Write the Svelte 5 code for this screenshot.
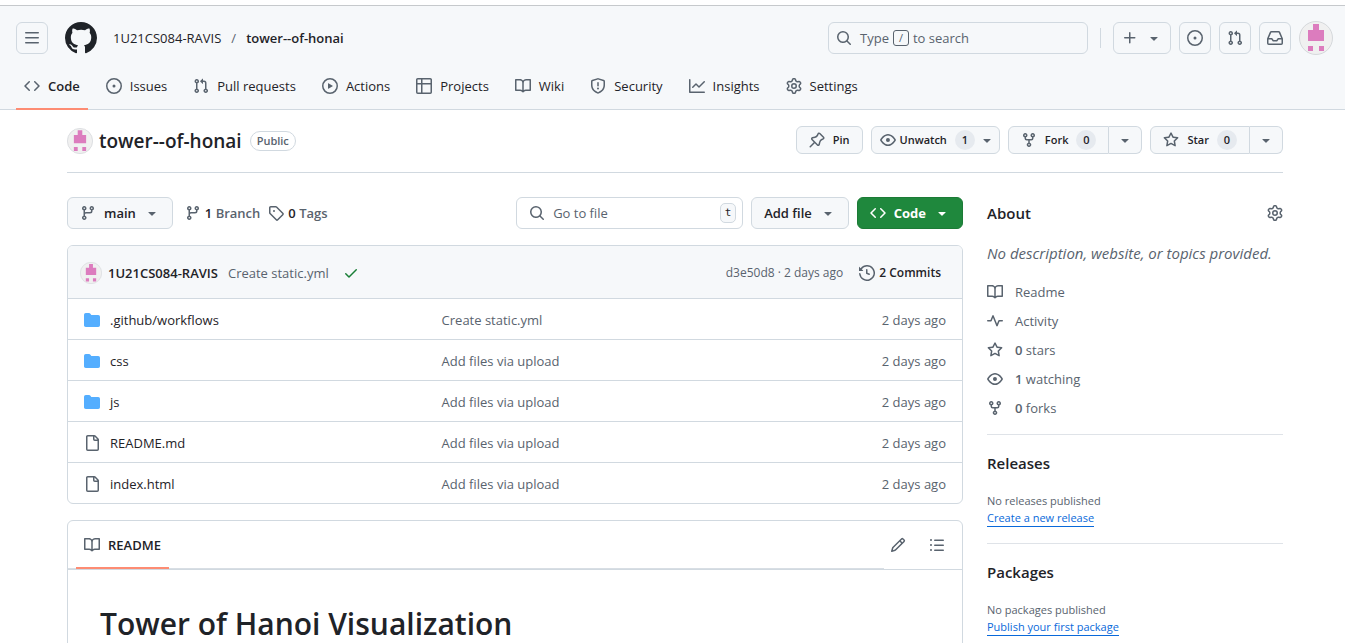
<script>
  const icons = {
    bars: 'M1 2.75A.75.75 0 0 1 1.75 2h12.5a.75.75 0 0 1 0 1.5H1.75A.75.75 0 0 1 1 2.75Zm0 5A.75.75 0 0 1 1.75 7h12.5a.75.75 0 0 1 0 1.5H1.75A.75.75 0 0 1 1 7.75ZM1.75 12h12.5a.75.75 0 0 1 0 1.5H1.75a.75.75 0 0 1 0-1.5Z',
    mark: 'M8 0c4.42 0 8 3.58 8 8a8.013 8.013 0 0 1-5.45 7.59c-.4.08-.55-.17-.55-.38 0-.27.01-1.13.01-2.2 0-.75-.25-1.23-.54-1.48 1.78-.2 3.65-.88 3.65-3.95 0-.88-.31-1.59-.82-2.15.08-.2.36-1.02-.08-2.12 0 0-.67-.22-2.2.82-.64-.18-1.32-.27-2-.27-.68 0-1.36.09-2 .27-1.53-1.03-2.2-.82-2.2-.82-.44 1.1-.16 1.92-.08 2.12-.51.56-.82 1.28-.82 2.15 0 3.06 1.86 3.75 3.64 3.95-.23.2-.44.55-.51 1.07-.46.21-1.61.55-2.33-.66-.15-.24-.6-.83-1.23-.82-.67.01-.27.38.01.53.34.19.73.9.82 1.13.16.45.68 1.31 2.69.94 0 .67.01 1.3.01 1.49 0 .21-.15.45-.55.38A7.995 7.995 0 0 1 0 8c0-4.42 3.58-8 8-8Z',
    code: 'm11.28 3.22 4.25 4.25a.75.75 0 0 1 0 1.06l-4.25 4.25a.749.749 0 0 1-1.275-.326.749.749 0 0 1 .215-.734L13.94 8l-3.72-3.72a.749.749 0 0 1 .326-1.275.749.749 0 0 1 .734.215Zm-6.56 0a.751.751 0 0 1 1.042.018.751.751 0 0 1 .018 1.042L2.06 8l3.72 3.72a.749.749 0 0 1-.326 1.275.749.749 0 0 1-.734-.215L.47 8.53a.75.75 0 0 1 0-1.06Z',
    issue: 'M8 9.5a1.5 1.5 0 1 0 0-3 1.5 1.5 0 0 0 0 3ZM8 0a8 8 0 1 1 0 16A8 8 0 0 1 8 0ZM1.5 8a6.5 6.5 0 1 0 13 0 6.5 6.5 0 0 0-13 0Z',
    pull: 'M1.5 3.25a2.25 2.25 0 1 1 3 2.122v5.256a2.251 2.251 0 1 1-1.5 0V5.372A2.25 2.25 0 0 1 1.5 3.25Zm5.677-.177L9.573.677A.25.25 0 0 1 10 .854V2.5h1A2.5 2.5 0 0 1 13.5 5v5.628a2.251 2.251 0 1 1-1.5 0V5a1 1 0 0 0-1-1h-1v1.646a.25.25 0 0 1-.427.177L7.177 3.427a.25.25 0 0 1 0-.354ZM3.75 2.5a.75.75 0 1 0 0 1.5.75.75 0 0 0 0-1.5Zm0 9.5a.75.75 0 1 0 0 1.5.75.75 0 0 0 0-1.5Zm8.25.75a.75.75 0 1 0 1.5 0 .75.75 0 0 0-1.5 0Z',
    play: 'M8 0a8 8 0 1 1 0 16A8 8 0 0 1 8 0ZM1.5 8a6.5 6.5 0 1 0 13 0 6.5 6.5 0 0 0-13 0Zm4.879-2.773 4.264 2.559a.25.25 0 0 1 0 .428l-4.264 2.559A.25.25 0 0 1 6 10.559V5.442a.25.25 0 0 1 .379-.215Z',
    table: 'M0 1.75C0 .784.784 0 1.75 0h12.5C15.216 0 16 .784 16 1.75v12.5A1.75 1.75 0 0 1 14.25 16H1.75A1.75 1.75 0 0 1 0 14.25ZM6.5 6.5v8h7.75a.25.25 0 0 0 .25-.25V6.5Zm8-1.5V1.75a.25.25 0 0 0-.25-.25H6.5V5Zm-13 1.5v7.75c0 .138.112.25.25.25H5v-8ZM5 5V1.5H1.75a.25.25 0 0 0-.25.25V5Z',
    book: 'M0 1.75A.75.75 0 0 1 .75 1h4.253c1.227 0 2.317.59 3 1.501A3.743 3.743 0 0 1 11.006 1h4.245a.75.75 0 0 1 .75.75v10.5a.75.75 0 0 1-.75.75h-4.507a2.25 2.25 0 0 0-1.591.659l-.622.621a.75.75 0 0 1-1.06 0l-.622-.621A2.25 2.25 0 0 0 5.258 13H.75a.75.75 0 0 1-.75-.75Zm7.251 10.324.004-5.073-.002-2.253A2.25 2.25 0 0 0 5.003 2.5H1.5v9h3.757a3.75 3.75 0 0 1 1.994.574ZM8.755 4.75l-.004 7.322a3.752 3.752 0 0 1 1.992-.572H14.5v-9h-3.495a2.25 2.25 0 0 0-2.25 2.25Z',
    shield: 'M7.467.133a1.748 1.748 0 0 1 1.066 0l5.25 1.68A1.75 1.75 0 0 1 15 3.48V7c0 1.566-.32 3.182-1.303 4.682-.983 1.498-2.585 2.813-5.032 3.855a1.697 1.697 0 0 1-1.33 0c-2.447-1.042-4.049-2.357-5.032-3.855C1.32 10.182 1 8.566 1 7V3.48a1.75 1.75 0 0 1 1.217-1.667Zm.61 1.429a.25.25 0 0 0-.153 0l-5.25 1.68a.25.25 0 0 0-.174.238V7c0 1.358.275 2.666 1.057 3.86.784 1.194 2.121 2.34 4.366 3.297a.196.196 0 0 0 .154 0c2.245-.956 3.582-2.104 4.366-3.298C13.225 9.666 13.5 8.36 13.5 7V3.48a.251.251 0 0 0-.174-.237l-5.25-1.68ZM8.75 4.75v3a.75.75 0 0 1-1.5 0v-3a.75.75 0 0 1 1.5 0ZM9 10.5a1 1 0 1 1-2 0 1 1 0 0 1 2 0Z',
    graph: 'M1.5 1.75V13.5h13.75a.75.75 0 0 1 0 1.5H.75a.75.75 0 0 1-.75-.75V1.75a.75.75 0 0 1 1.5 0Zm14.28 2.53-5.25 5.25a.75.75 0 0 1-1.06 0L7 7.06 4.28 9.78a.751.751 0 0 1-1.042-.018.751.751 0 0 1-.018-1.042l3.25-3.25a.75.75 0 0 1 1.06 0L10 7.94l4.72-4.72a.751.751 0 0 1 1.042.018.751.751 0 0 1 .018 1.042Z',
    gear: 'M8 0a8.2 8.2 0 0 1 .701.031C9.444.095 9.99.645 10.16 1.29l.288 1.107c.018.066.079.158.212.224.231.114.454.243.668.386.123.082.233.09.299.071l1.103-.303c.644-.176 1.392.021 1.82.63.27.385.506.792.704 1.218.315.675.111 1.422-.364 1.891l-.814.806c-.049.048-.098.147-.088.294.016.257.016.515 0 .772-.01.147.038.246.088.294l.814.806c.475.469.679 1.216.364 1.891a7.977 7.977 0 0 1-.704 1.217c-.428.61-1.176.807-1.82.63l-1.102-.302c-.067-.019-.177-.011-.3.071a5.909 5.909 0 0 1-.668.386c-.133.066-.194.158-.211.224l-.29 1.106c-.168.646-.715 1.196-1.458 1.26a8.006 8.006 0 0 1-1.402 0c-.743-.064-1.289-.614-1.458-1.26l-.289-1.106c-.018-.066-.079-.158-.212-.224a5.738 5.738 0 0 1-.668-.386c-.123-.082-.233-.09-.299-.071l-1.103.303c-.644.176-1.392-.021-1.82-.63a8.12 8.12 0 0 1-.704-1.218c-.315-.675-.111-1.422.363-1.891l.815-.806c.05-.048.098-.147.088-.294a6.214 6.214 0 0 1 0-.772c.01-.147-.038-.246-.088-.294l-.815-.806C.635 6.045.431 5.298.746 4.623a7.92 7.92 0 0 1 .704-1.217c.428-.61 1.176-.807 1.82-.63l1.102.302c.067.019.177.011.3-.071.214-.143.437-.272.668-.386.133-.066.194-.158.211-.224l.29-1.106C6.009.645 6.556.095 7.299.03 7.53.01 7.764 0 8 0Zm-.571 1.525c-.036.003-.108.036-.137.146l-.289 1.105c-.147.561-.549.967-.998 1.189-.173.086-.34.183-.5.29-.417.278-.97.423-1.529.27l-1.103-.303c-.109-.03-.175.016-.195.045-.22.312-.412.644-.573.99-.014.031-.021.11.059.19l.815.806c.411.406.562.957.53 1.456a4.709 4.709 0 0 0 0 .582c.032.499-.119 1.05-.53 1.456l-.815.806c-.081.08-.073.159-.059.19.162.346.353.677.573.989.02.03.085.076.195.046l1.102-.303c.56-.153 1.113-.008 1.53.27.161.107.328.204.501.29.447.222.85.629.997 1.189l.289 1.105c.029.109.101.143.137.146a6.6 6.6 0 0 0 1.142 0c.036-.003.108-.036.137-.146l.289-1.105c.147-.561.549-.967.998-1.189.173-.086.34-.183.5-.29.417-.278.97-.423 1.529-.27l1.103.303c.109.029.175-.016.195-.045.22-.313.411-.644.573-.99.014-.031.021-.11-.059-.19l-.815-.806c-.411-.406-.562-.957-.53-1.456a4.709 4.709 0 0 0 0-.582c-.032-.499.119-1.05.53-1.456l.815-.806c.081-.08.073-.159.059-.19a6.464 6.464 0 0 0-.573-.989c-.02-.03-.085-.076-.195-.046l-1.102.303c-.56.153-1.113.008-1.53-.27a4.44 4.44 0 0 0-.501-.29c-.447-.222-.85-.629-.997-1.189l-.289-1.105c-.029-.11-.101-.143-.137-.146a6.6 6.6 0 0 0-1.142 0ZM11 8a3 3 0 1 1-6 0 3 3 0 0 1 6 0ZM9.5 8a1.5 1.5 0 1 0-3.001.001A1.5 1.5 0 0 0 9.5 8Z',
    search: 'M10.68 11.74a6 6 0 0 1-7.922-8.982 6 6 0 0 1 8.982 7.922l3.04 3.04a.749.749 0 0 1-.326 1.275.749.749 0 0 1-.734-.215ZM11.5 7a4.499 4.499 0 1 0-8.997 0A4.499 4.499 0 0 0 11.5 7Z',
    plus: 'M7.75 2a.75.75 0 0 1 .75.75V7h4.25a.75.75 0 0 1 0 1.5H8.5v4.25a.75.75 0 0 1-1.5 0V8.5H2.75a.75.75 0 0 1 0-1.5H7V2.75A.75.75 0 0 1 7.75 2Z',
    down: 'm4.427 7.427 3.396 3.396a.25.25 0 0 0 .354 0l3.396-3.396A.25.25 0 0 0 11.396 7H4.604a.25.25 0 0 0-.177.427Z',
    inbox: 'M2.8 2.06A1.75 1.75 0 0 1 4.41 1h7.18c.7 0 1.333.417 1.61 1.06l2.74 6.395c.04.093.06.194.06.295v4.5A1.75 1.75 0 0 1 14.25 15H1.75A1.75 1.75 0 0 1 0 13.25v-4.5c0-.101.02-.202.06-.295Zm1.61.44a.25.25 0 0 0-.23.152L1.887 8H4.75a.75.75 0 0 1 .6.3L6.625 10h2.75l1.275-1.7a.75.75 0 0 1 .6-.3h2.863L11.82 2.652a.25.25 0 0 0-.23-.152Zm10.09 7h-2.875l-1.275 1.7a.75.75 0 0 1-.6.3h-3.5a.75.75 0 0 1-.6-.3L4.375 9.5H1.5v3.75c0 .138.112.25.25.25h12.5a.25.25 0 0 0 .25-.25Z',
    pin: 'm11.294.984 3.722 3.722a1.75 1.75 0 0 1-.504 2.826l-1.327.613a3.089 3.089 0 0 0-1.707 2.084l-.584 2.454c-.317 1.332-1.972 1.8-2.94.832L5.75 11.311 1.78 15.28a.749.749 0 1 1-1.06-1.06l3.969-3.97-2.204-2.204c-.968-.968-.5-2.623.832-2.94l2.454-.584a3.08 3.08 0 0 0 2.084-1.707l.613-1.327a1.75 1.75 0 0 1 2.826-.504ZM6.283 9.723l2.732 2.731a.25.25 0 0 0 .42-.119l.584-2.454a4.586 4.586 0 0 1 2.537-3.098l1.328-.613a.25.25 0 0 0 .072-.404l-3.722-3.722a.25.25 0 0 0-.404.072l-.613 1.328a4.584 4.584 0 0 1-3.098 2.537l-2.454.584a.25.25 0 0 0-.119.42l2.731 2.732Z',
    eye: 'M8 2c1.981 0 3.671.992 4.933 2.078 1.27 1.091 2.187 2.345 2.637 3.023a1.62 1.62 0 0 1 0 1.798c-.45.678-1.367 1.932-2.637 3.023C11.67 13.008 9.981 14 8 14c-1.981 0-3.671-.992-4.933-2.078C1.797 10.83.88 9.576.43 8.898a1.62 1.62 0 0 1 0-1.798c.45-.677 1.367-1.931 2.637-3.022C4.33 2.992 6.019 2 8 2ZM1.679 7.932a.12.12 0 0 0 0 .136c.411.622 1.241 1.75 2.366 2.717C5.176 11.758 6.527 12.5 8 12.5c1.473 0 2.825-.742 3.955-1.715 1.124-.967 1.954-2.096 2.366-2.717a.12.12 0 0 0 0-.136c-.412-.621-1.242-1.75-2.366-2.717C10.824 4.242 9.473 3.5 8 3.5c-1.473 0-2.825.742-3.955 1.715-1.124.967-1.954 2.096-2.366 2.717ZM8 10a2 2 0 1 1-.001-3.999A2 2 0 0 1 8 10Z',
    fork: 'M5 5.372v.878c0 .414.336.75.75.75h4.5a.75.75 0 0 0 .75-.75v-.878a2.25 2.25 0 1 1 1.5 0v.878a2.25 2.25 0 0 1-2.25 2.25h-1.5v2.128a2.251 2.251 0 1 1-1.5 0V8.5h-1.5A2.25 2.25 0 0 1 3.5 6.25v-.878a2.25 2.25 0 1 1 1.5 0ZM5 3.25a.75.75 0 1 0-1.5 0 .75.75 0 0 0 1.5 0Zm6.75.75a.75.75 0 1 0 0-1.5.75.75 0 0 0 0 1.5Zm-3 8.75a.75.75 0 1 0-1.5 0 .75.75 0 0 0 1.5 0Z',
    star: 'M8 .25a.75.75 0 0 1 .673.418l1.882 3.815 4.21.612a.75.75 0 0 1 .416 1.279l-3.046 2.97.719 4.192a.751.751 0 0 1-1.088.791L8 12.347l-3.766 1.98a.75.75 0 0 1-1.088-.79l.72-4.194L.818 6.374a.75.75 0 0 1 .416-1.28l4.21-.611L7.327.668A.75.75 0 0 1 8 .25Zm0 2.445L6.615 5.5a.75.75 0 0 1-.564.41l-3.097.45 2.24 2.184a.75.75 0 0 1 .216.664l-.528 3.084 2.769-1.456a.75.75 0 0 1 .698 0l2.77 1.456-.53-3.084a.75.75 0 0 1 .216-.664l2.24-2.183-3.096-.45a.75.75 0 0 1-.564-.41L8 2.694Z',
    branch: 'M9.5 3.25a2.25 2.25 0 1 1 3 2.122V6A2.5 2.5 0 0 1 10 8.5H6a1 1 0 0 0-1 1v1.128a2.251 2.251 0 1 1-1.5 0V5.372a2.25 2.25 0 1 1 1.5 0v1.836A2.493 2.493 0 0 1 6 7h4a1 1 0 0 0 1-1v-.628A2.25 2.25 0 0 1 9.5 3.25Zm-6 0a.75.75 0 1 0 1.5 0 .75.75 0 0 0-1.5 0Zm8.25-.75a.75.75 0 1 0 0 1.5.75.75 0 0 0 0-1.5ZM4.25 12a.75.75 0 1 0 0 1.5.75.75 0 0 0 0-1.5Z',
    tag: 'M1 7.775V2.75C1 1.784 1.784 1 2.75 1h5.025c.464 0 .91.184 1.238.513l6.25 6.25a1.75 1.75 0 0 1 0 2.474l-5.026 5.026a1.75 1.75 0 0 1-2.474 0l-6.25-6.25A1.752 1.752 0 0 1 1 7.775Zm1.5 0c0 .066.026.13.073.177l6.25 6.25a.25.25 0 0 0 .354 0l5.025-5.025a.25.25 0 0 0 0-.354l-6.25-6.25a.25.25 0 0 0-.177-.073H2.75a.25.25 0 0 0-.25.25ZM6 5a1 1 0 1 1 0 2 1 1 0 0 1 0-2Z',
    check: 'M13.78 4.22a.75.75 0 0 1 0 1.06l-7.25 7.25a.75.75 0 0 1-1.06 0L2.22 9.28a.751.751 0 0 1 .018-1.042.751.751 0 0 1 1.042-.018L6 10.94l6.72-6.72a.75.75 0 0 1 1.06 0Z',
    history: 'm.427 1.927 1.215 1.215a8.002 8.002 0 1 1-1.6 5.685.75.75 0 1 1 1.493-.154 6.5 6.5 0 1 0 1.18-4.458l1.358 1.358A.25.25 0 0 1 3.896 6H.25A.25.25 0 0 1 0 5.75V2.104a.25.25 0 0 1 .427-.177ZM7.75 4a.75.75 0 0 1 .75.75v2.992l2.028.812a.75.75 0 0 1-.557 1.392l-2.5-1A.751.751 0 0 1 7 8.25v-3.5A.75.75 0 0 1 7.75 4Z',
    folder: 'M1.75 1A1.75 1.75 0 0 0 0 2.75v10.5C0 14.216.784 15 1.75 15h12.5A1.75 1.75 0 0 0 16 13.25v-8.5A1.75 1.75 0 0 0 14.25 3H7.5a.25.25 0 0 1-.2-.1l-.9-1.2C6.07 1.26 5.55 1 5 1H1.75Z',
    file: 'M2 1.75C2 .784 2.784 0 3.75 0h6.586c.464 0 .909.184 1.237.513l2.914 2.914c.329.328.513.773.513 1.237v9.586A1.75 1.75 0 0 1 13.25 16h-9.5A1.75 1.75 0 0 1 2 14.25Zm1.75-.25a.25.25 0 0 0-.25.25v12.5c0 .138.112.25.25.25h9.5a.25.25 0 0 0 .25-.25V6h-2.75A1.75 1.75 0 0 1 9 4.25V1.5Zm6.75.062V4.25c0 .138.112.25.25.25h2.688l-.011-.013-2.914-2.914-.013-.011Z',
    pencil: 'M11.013 1.427a1.75 1.75 0 0 1 2.474 0l1.086 1.086a1.75 1.75 0 0 1 0 2.474l-8.61 8.61c-.21.21-.47.364-.756.445l-3.251.93a.75.75 0 0 1-.927-.928l.929-3.25c.081-.286.235-.547.445-.758l8.61-8.61Zm.176 4.823L9.75 4.81l-6.286 6.287a.253.253 0 0 0-.064.108l-.558 1.953 1.953-.558a.253.253 0 0 0 .108-.064Zm1.238-3.763a.25.25 0 0 0-.354 0L10.811 3.75l1.439 1.44 1.263-1.263a.25.25 0 0 0 0-.354Z',
    list: 'M5.75 2.5h8.5a.75.75 0 0 1 0 1.5h-8.5a.75.75 0 0 1 0-1.5Zm0 5h8.5a.75.75 0 0 1 0 1.5h-8.5a.75.75 0 0 1 0-1.5Zm0 5h8.5a.75.75 0 0 1 0 1.5h-8.5a.75.75 0 0 1 0-1.5ZM2 14a1 1 0 1 1 0-2 1 1 0 0 1 0 2Zm1-6a1 1 0 1 1-2 0 1 1 0 0 1 2 0ZM2 4a1 1 0 1 1 0-2 1 1 0 0 1 0 2Z',
    pulse: 'M6 2c.306 0 .582.187.696.471L10 10.731l1.304-3.26A.751.751 0 0 1 12 7h3.25a.75.75 0 0 1 0 1.5h-2.742l-1.812 4.528a.751.751 0 0 1-1.392 0L6 4.77 4.696 8.03A.75.75 0 0 1 4 8.5H.75a.75.75 0 0 1 0-1.5h2.742l1.812-4.529A.751.751 0 0 1 6 2Z'
  };

  const tabs = [
    ['code', 'Code'],
    ['issue', 'Issues'],
    ['pull', 'Pull requests'],
    ['play', 'Actions'],
    ['table', 'Projects'],
    ['book', 'Wiki'],
    ['shield', 'Security'],
    ['graph', 'Insights'],
    ['gear', 'Settings']
  ];

  const files = [
    { dir: true, name: '.github/workflows', message: 'Create static.yml' },
    { dir: true, name: 'css', message: 'Add files via upload' },
    { dir: true, name: 'js', message: 'Add files via upload' },
    { dir: false, name: 'README.md', message: 'Add files via upload' },
    { dir: false, name: 'index.html', message: 'Add files via upload' }
  ];

  const facts = [
    { icon: 'book', text: 'Readme' },
    { icon: 'pulse', text: 'Activity' },
    { icon: 'star', count: '0', text: 'stars' },
    { icon: 'eye', count: '1', text: 'watching' },
    { icon: 'fork', count: '0', text: 'forks' }
  ];

  let query = $state('');
</script>

{#snippet icon(name, size = 16)}
  <svg class="icon" viewBox="0 0 16 16" width={size} height={size} aria-hidden="true"><path fill-rule="evenodd" d={icons[name]} /></svg>
{/snippet}

{#snippet avatar(size)}
  <svg class="avatar" viewBox="0 0 34 34" width={size} height={size} aria-hidden="true">
    <circle cx="17" cy="17" r="16.5" fill="#f0f0f0" stroke="#d5d8db" />
    <path fill="#dc7cbe" d="M14 3h6v6h5v11H9V9h5ZM9 25h5v5H9ZM20 25h5v5h-5Z" />
  </svg>
{/snippet}

<header class="site">
  <div class="bar">
    <button class="square" aria-label="Open menu">{@render icon('bars')}</button>
    <a class="logo" href="#home" aria-label="Homepage">{@render icon('mark', 32)}</a>
    <nav class="crumbs" aria-label="Breadcrumb">
      <a href="#owner">1U21CS084-RAVIS</a><span>/</span><a class="strong" href="#repo">tower--of-honai</a>
    </nav>
    <button class="search">{@render icon('search')}<span>Type</span><kbd>/</kbd><span>to search</span></button>
    <span class="rule"></span>
    <button class="square wide" aria-label="Create new">{@render icon('plus')}{@render icon('down')}</button>
    <button class="square" aria-label="Issues">{@render icon('issue')}</button>
    <button class="square" aria-label="Pull requests">{@render icon('pull')}</button>
    <button class="square" aria-label="Notifications">{@render icon('inbox')}</button>
    <button class="user" aria-label="User menu">{@render avatar(34)}</button>
  </div>
  <nav class="tabs" aria-label="Repository">
    {#each tabs as [glyph, label], i}
      <a href="#{glyph}" class:current={i === 0}>{@render icon(glyph)}<span>{label}</span></a>
    {/each}
  </nav>
</header>

<div class="page">
  <div class="title">
    {@render avatar(26)}
    <h1><a href="#repo">tower--of-honai</a></h1>
    <span class="pill">Public</span>
    <div class="actions">
      <button class="small pin">{@render icon('pin')}Pin</button>
      <button class="small watch">{@render icon('eye')}Unwatch<span class="count">1</span>{@render icon('down')}</button>
      <div class="split">
        <button class="small">{@render icon('fork')}Fork<span class="count">0</span></button>
        <button class="small more" aria-label="Fork options">{@render icon('down')}</button>
      </div>
      <div class="split">
        <button class="small">{@render icon('star')}Star<span class="count">0</span></button>
        <button class="small more" aria-label="Star options">{@render icon('down')}</button>
      </div>
    </div>
  </div>

  <div class="columns">
    <main>
      <div class="tools">
        <button class="medium main-branch">{@render icon('branch')}main{@render icon('down')}</button>
        <a class="stat" href="#branches">{@render icon('branch')}<span><b>1</b> Branch</span></a>
        <a class="stat" href="#tags">{@render icon('tag')}<span><b>0</b> Tags</span></a>
        <label class="find">
          {@render icon('search')}
          <input type="text" placeholder="Go to file" aria-label="Go to file" bind:value={query} />
          <kbd>t</kbd>
        </label>
        <button class="medium add">Add file{@render icon('down')}</button>
        <button class="medium green">{@render icon('code')}Code{@render icon('down')}</button>
      </div>

      <section class="box">
        <div class="commit">
          {@render avatar(22)}
          <a class="author" href="#owner">1U21CS084-RAVIS</a>
          <a class="message" href="#commit">Create static.yml</a>
          <span class="ok">{@render icon('check')}</span>
          <span class="sha">d3e50d8 · 2 days ago</span>
          <a class="commits" href="#commits">{@render icon('history')}2 Commits</a>
        </div>
        <table>
          <tbody>
            {#each files as file}
              <tr>
                <td class="name">
                  <div class:dir={file.dir}>{@render icon(file.dir ? 'folder' : 'file')}<a href="#file">{file.name}</a></div>
                </td>
                <td><a href="#commit">{file.message}</a></td>
                <td class="age">2 days ago</td>
              </tr>
            {/each}
          </tbody>
        </table>
      </section>

      <section class="box readme">
        <div class="readme-bar">
          <nav aria-label="Repository files">
            <a href="#readme">{@render icon('book')}README</a>
          </nav>
          <div class="readme-tools">
            <button aria-label="Edit file">{@render icon('pencil')}</button>
            <button aria-label="Outline">{@render icon('list')}</button>
          </div>
        </div>
        <article>
          <h2>Tower of Hanoi Visualization</h2>
        </article>
      </section>
    </main>

    <aside>
      <section>
        <div class="about">
          <h2>About</h2>
          <button aria-label="Edit repository details">{@render icon('gear')}</button>
        </div>
        <p class="description">No description, website, or topics provided.</p>
        <ul>
          {#each facts as fact}
            <li><a href="#{fact.icon}">{@render icon(fact.icon)}<span>{#if fact.count}<b>{fact.count}</b>{' '}{/if}{fact.text}</span></a></li>
          {/each}
        </ul>
      </section>
      <section>
        <h2>Releases</h2>
        <p>No releases published</p>
        <a class="link" href="#new-release">Create a new release</a>
      </section>
      <section>
        <h2>Packages</h2>
        <p>No packages published</p>
        <a class="link" href="#publish">Publish your first package</a>
      </section>
    </aside>
  </div>
</div>

<style>
  :global(body) {
    margin: 0;
    background: #fff;
    color: #1f2328;
    font: 13px/20px 'Open Sans', 'Noto Sans', sans-serif;
    overflow: hidden;
  }
  :global(*) { box-sizing: border-box; }
  a { color: inherit; text-decoration: none; }
  button { font: inherit; color: inherit; background: none; border: 0; padding: 0; cursor: pointer; }
  h1, h2, p, ul { margin: 0; padding: 0; }
  .icon { display: block; flex: none; fill: #59636e; }
  .avatar { display: block; flex: none; }

  .site {
    margin-top: 5px;
    border-top: 1px solid #c6c9cc;
    border-bottom: 1px solid #d1d9e0;
    background: #f6f8fa;
  }
  .bar { display: flex; align-items: center; gap: 8px; padding: 15px 12px 0 16px; }
  .square {
    display: flex;
    align-items: center;
    justify-content: center;
    width: 32px;
    height: 32px;
    border: 1px solid #d1d9e0;
    border-radius: 6px;
  }
  .wide { width: 58px; gap: 8px; }
  .logo { margin-left: 9px; }
  .logo .icon { fill: #1f2328; }
  .crumbs { display: flex; gap: 10px; margin-left: 8px; }
  .crumbs span { color: #59636e; }
  .strong { font-weight: 600; }
  .search {
    display: flex;
    align-items: center;
    gap: 4px;
    width: 260px;
    height: 32px;
    margin-left: auto;
    padding: 0 7px;
    border: 1px solid #d1d9e0;
    border-radius: 6px;
    color: #59636e;
  }
  .search .icon { margin-right: 4px; }
  .search kbd {
    width: 16px;
    border: 1px solid #59636e;
    border-radius: 3px;
    font: 11px/14px 'Open Sans', sans-serif;
    text-align: center;
  }
  .rule { width: 1px; height: 20px; margin: 0 4px; background: #d1d9e0; }
  .tabs { display: flex; gap: 10px; padding: 7px 16px 0; }
  .tabs a {
    display: flex;
    align-items: center;
    gap: 8px;
    height: 48px;
    padding: 2px 8px 0;
    margin-bottom: -1px;
    border-bottom: 2px solid transparent;
  }
  .tabs .current { border-color: #fd8c73; font-weight: 600; }

  .page { padding: 0 62px 0 67px; }
  .title {
    display: flex;
    align-items: center;
    gap: 6px;
    height: 63px;
    border-bottom: 1px solid #d1d9e0;
  }
  h1 { font-size: 19px; line-height: 30px; font-weight: 600; }
  .pill {
    margin-left: 2px;
    padding: 0 6px;
    border: 1px solid #d1d9e0;
    border-radius: 20px;
    color: #59636e;
    font-size: 11px;
    line-height: 18px;
    font-weight: 600;
  }
  .actions { display: flex; gap: 8px; margin-left: auto; padding-bottom: 2px; }
  .small, .medium {
    display: flex;
    align-items: center;
    border: 1px solid #d1d9e0;
    border-radius: 6px;
    background: #f6f8fa;
    font-weight: 600;
  }
  .small { gap: 8px; height: 28px; padding: 0 12px; font-size: 11px; }
  .watch { gap: 4px; padding: 0 4px 0 8px; }
  .count {
    min-width: 20px;
    border-radius: 20px;
    background: #e6eaef;
    text-align: center;
  }
  .watch .count { margin-left: 4px; }
  .split { display: flex; }
  .split .small:first-child { border-radius: 6px 0 0 6px; }
  .split .more { width: 33px; padding: 0 8px; border-left: 0; border-radius: 0 6px 6px 0; }

  .columns { display: flex; gap: 24px; padding-top: 24px; }
  main { flex: 1; min-width: 0; }
  aside { width: 296px; flex: none; }
  .tools { display: flex; align-items: center; gap: 8px; margin-bottom: 16px; }
  .medium { gap: 8px; height: 32px; padding: 0 12px; }
  .stat { display: flex; align-items: center; gap: 4px; color: #59636e; font-weight: 600; }
  .main-branch + .stat { margin-left: 4px; }
  .stat b, .author, .commits { color: #1f2328; font-weight: 600; }
  .find {
    display: flex;
    align-items: center;
    gap: 8px;
    width: 227px;
    height: 32px;
    margin-left: auto;
    padding: 0 6px 0 12px;
    border: 1px solid #d1d9e0;
    border-radius: 6px;
  }
  .find input {
    flex: 1;
    min-width: 0;
    padding: 0;
    border: 0;
    outline: 0;
    background: none;
    color: inherit;
    font: inherit;
  }
  .find input::placeholder { color: #59636e; opacity: 1; }
  .find kbd {
    width: 16px;
    border: 1px solid #d1d9e0;
    border-radius: 5px;
    background: #f6f8fa;
    font: 11px/18px 'DejaVu Sans Mono', monospace;
    text-align: center;
  }
  .green { border-color: #1c7b36; background: #1f883d; color: #fff; font-weight: 700; }
  .green .icon { fill: #fff; }

  .box { border: 1px solid #d1d9e0; border-radius: 6px; overflow: hidden; }
  .commit {
    display: flex;
    align-items: center;
    gap: 6px;
    height: 52px;
    padding: 2px 21px 0 12px;
    background: #f6f8fa;
    color: #59636e;
  }
  .message { margin-left: 4px; }
  .ok { margin-left: 8px; }
  .ok .icon { fill: #1a7f37; }
  .sha { margin-left: auto; font-size: 12px; }
  .commits { display: flex; align-items: center; gap: 4px; margin-left: 10px; font-size: 12px; }
  table { width: 100%; border-collapse: separate; border-spacing: 0; color: #59636e; }
  td { height: 41px; padding: 2px 16px 0; border-top: 1px solid #d1d9e0; }
  .name { width: 40%; color: #1f2328; }
  .name div { display: flex; align-items: center; gap: 10px; }
  .dir .icon { fill: #54aeff; }
  .age { text-align: right; }

  .readme { margin-top: 16px; }
  .readme-bar { display: flex; border-bottom: 1px solid #d1d9e0; }
  .readme-bar nav { flex: 1; padding-left: 8px; box-shadow: inset 0 -1px #d8dee4; }
  .readme-bar nav a {
    display: inline-flex;
    align-items: center;
    gap: 8px;
    height: 48px;
    padding: 2px 8px 0;
    border-bottom: 2px solid #fd8c73;
    font-weight: 600;
    vertical-align: top;
  }
  .readme-tools { display: flex; align-items: center; gap: 23px; padding: 0 17px 0 6px; }
  article { padding: 34px 32px 32px; }
  article h2 { font-size: 30px; line-height: 40px; font-weight: 600; }

  aside section { padding-bottom: 16px; margin-bottom: 16px; border-bottom: 1px solid #dfe3e8; }
  aside h2 { font-size: 15px; line-height: 24px; font-weight: 600; }
  .about { display: flex; justify-content: space-between; align-items: center; height: 32px; margin-bottom: 12px; }
  aside p { margin-top: 17px; color: #59636e; font-size: 11px; line-height: 18px; }
  aside .description { margin: 0 0 17px; font-size: 15px; line-height: 24px; font-style: italic; white-space: nowrap; }
  ul { list-style: none; color: #59636e; }
  li { padding-bottom: 9px; }
  li:last-child { padding-bottom: 0; }
  li a { display: flex; align-items: center; gap: 12px; }
  li b { font-weight: 600; }
  .link {
    display: table;
    border-bottom: 1px solid #0969da;
    color: #0969da;
    font-size: 11px;
    line-height: 16px;
  }
</style>
